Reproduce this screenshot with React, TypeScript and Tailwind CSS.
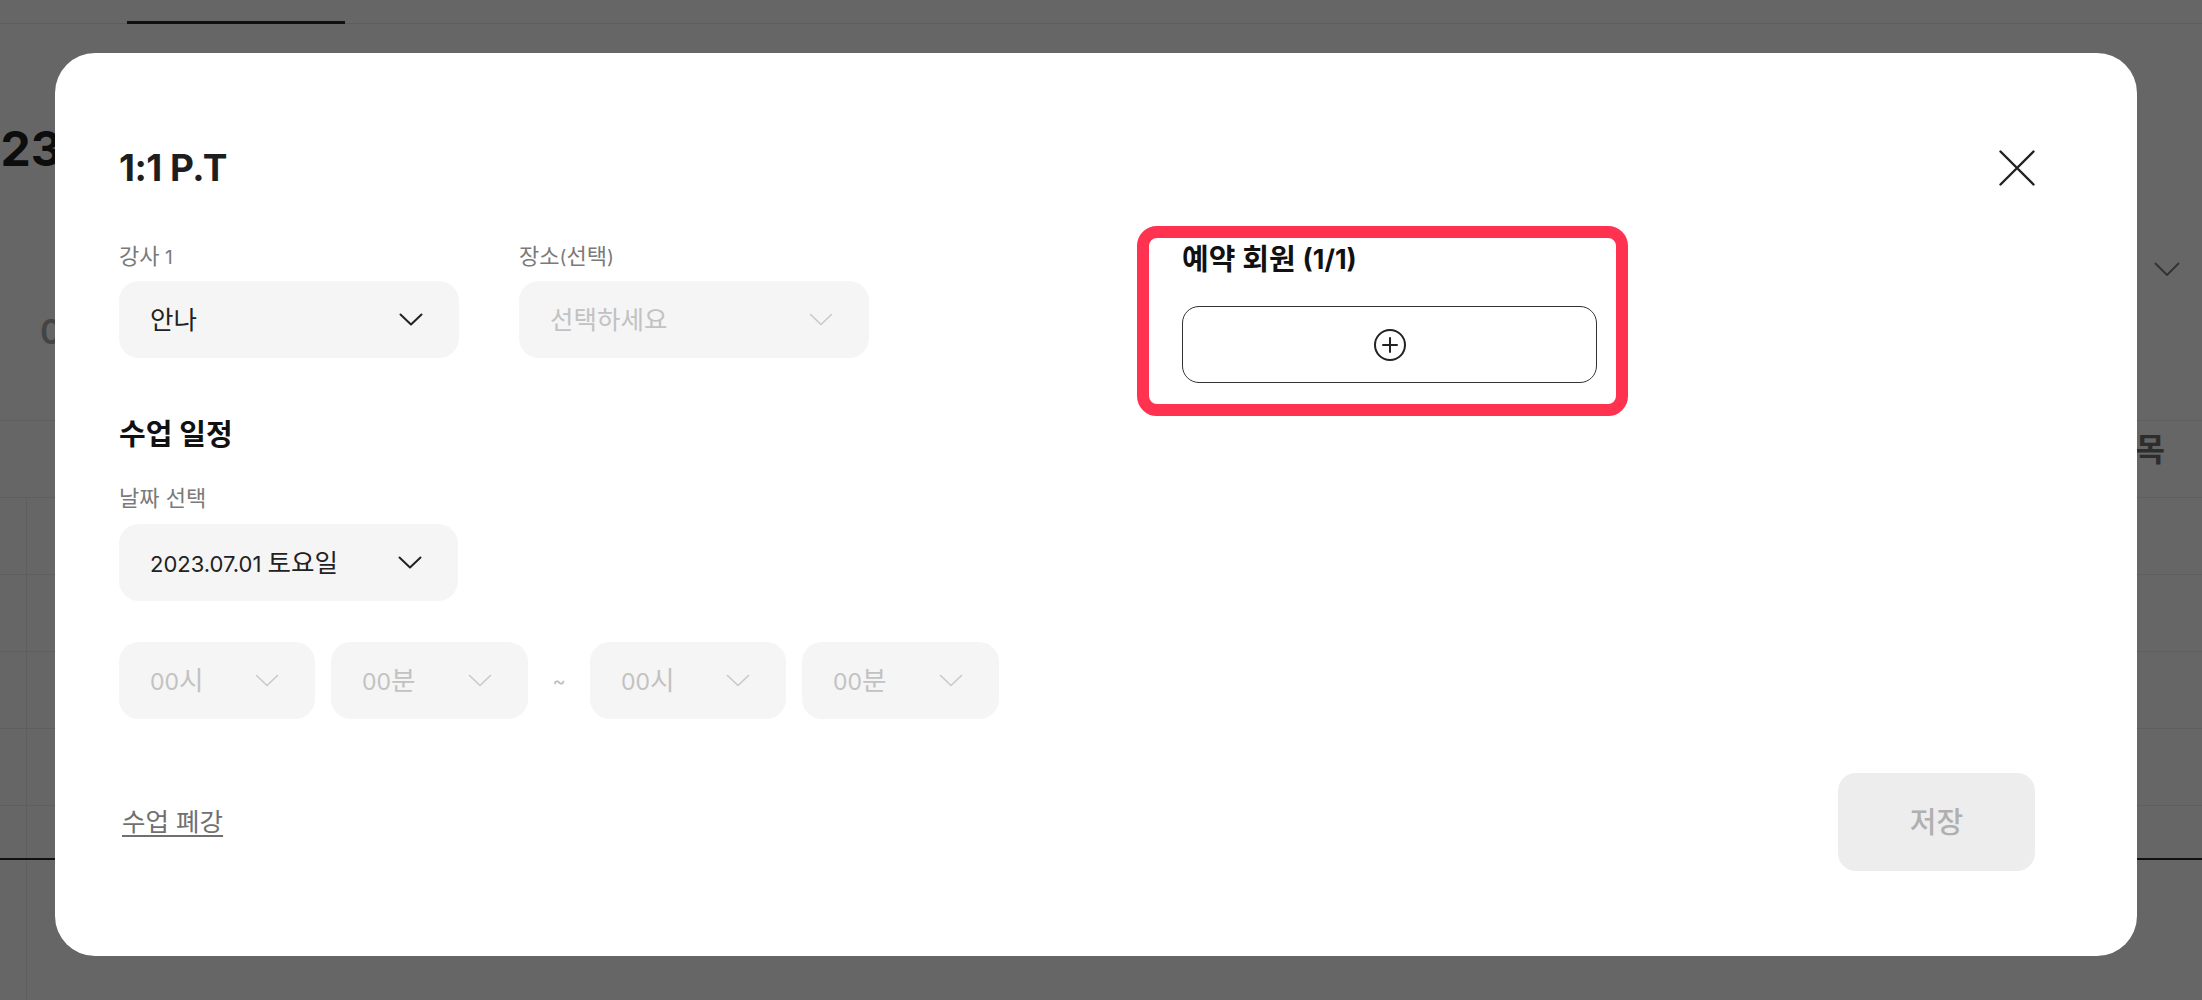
import React from "react";

const font = "font-['Inter','Noto_Sans_CJK_KR',sans-serif]";

// Hangul runs are drawn a little larger so they match the reference's Korean glyph size
function T({ s }: { s: string }) {
  const parts = s.split(/([\uAC00-\uD7A3]+(?: [\uAC00-\uD7A3]+)*)/);
  return (
    <>
      {parts.map((p, i) =>
        /[\uAC00-\uD7A3]/.test(p) ? (
          <span key={i} className="text-[1.16em]">{p}</span>
        ) : (
          <React.Fragment key={i}>{p}</React.Fragment>
        )
      )}
    </>
  );
}

function Chevron({ muted }: { muted?: boolean }) {
  return (
    <svg width="24" height="13" viewBox="0 0 24 13" fill="none" stroke={muted ? "#c9c9c9" : "#222"} strokeWidth={muted ? 1.6 : 2} strokeLinecap="round" strokeLinejoin="round">
      <path d="M1.5 1.5 12 11.5 22.5 1.5" />
    </svg>
  );
}

function SelectBox({ text, muted, width, size }: { text: string; muted?: boolean; width: string; size?: string }) {
  return (
    <div className={`flex h-[77px] items-center justify-between rounded-[20px] bg-[#f5f5f5] pl-[31px] pr-[36px] ${width}`}>
      <span className={`${size ?? "text-[22px]"} leading-none ${muted ? "text-[#c2c2c2]" : "text-[#222]"}`}>
        <T s={text} />
      </span>
      <Chevron muted={muted} />
    </div>
  );
}

function Label({ s }: { s: string }) {
  return (
    <span className="block h-[28px] whitespace-pre text-[19px] leading-[28px] text-[#7a7a7a]">
      <T s={s} />
    </span>
  );
}

function Background() {
  return (
    <div className="flex h-full flex-col">
      <div className="flex h-[24px] items-end border-b border-[#e8e8e8]">
        <div className="ml-[127px] h-[3px] w-[218px] translate-y-[1px] bg-[#2a2a2a]" />
      </div>
      <div className="flex h-[397px] justify-between border-b border-[#ececec]">
        <div className="flex flex-col">
          <div className="-ml-[62px] mt-[96px] text-[48px] font-bold leading-[58px] text-[#222]">2023.07</div>
          <div className="ml-[40px] mt-[132px] text-[34px] font-semibold leading-[44px] text-[#aaa]">0</div>
        </div>
        <div className="mr-[22px] mt-[238px]">
          <svg width="26" height="14" viewBox="0 0 26 14" fill="none" stroke="#808080" strokeWidth="2">
            <path d="M1 1 13 13 25 1" />
          </svg>
        </div>
      </div>
      <div className="flex h-[77px] items-center justify-end border-b border-[#ececec] pb-[18px] pr-[37px]">
        <span className="text-[32px] font-bold text-[#707070]">목</span>
      </div>
      {[0, 1, 2, 3].map((i) => (
        <div key={i} className="flex h-[77px] border-b border-[#ececec]">
          <div className="w-[27px] border-r border-[#ececec]" />
        </div>
      ))}
      <div className="flex h-[54px] border-b-2 border-[#2a2a2a]">
        <div className="w-[27px] border-r border-[#ececec]" />
      </div>
      <div className="flex flex-1">
        <div className="w-[27px] border-r border-[#ececec]" />
      </div>
    </div>
  );
}

export default function App() {
  return (
    <div className={`relative h-[1000px] w-full overflow-hidden bg-white ${font}`}>
      <Background />

      <div className="absolute inset-0 flex items-start bg-black/60 pl-[55px] pt-[53px]">
        <div className="flex w-[2082px] flex-col rounded-[40px] bg-white pb-[85px] pl-[64px] pr-[102px] pt-[93px]">
          <div className="flex items-center justify-between">
            <h2 className="text-[37px] font-bold leading-[43px] tracking-[-0.5px] text-[#1e1e1e]">1:1 P.T</h2>
            <button className="flex h-[36px] w-[36px] items-center justify-center">
              <svg width="36" height="36" viewBox="0 0 36 36" fill="none" stroke="#222" strokeWidth="2.4" strokeLinecap="round">
                <path d="M1.5 1.5 34.5 34.5M34.5 1.5 1.5 34.5" />
              </svg>
            </button>
          </div>

          <div className="mt-[37px] flex items-start">
            <div className="flex w-[1018px] flex-col pt-[16px]">
              <div className="flex gap-[60px]">
                <div className="flex flex-col gap-[11px]">
                  <Label s="강사 1" />
                  <SelectBox text="안나" width="w-[340px]" />
                </div>
                <div className="flex flex-col gap-[11px]">
                  <Label s="장소(선택)" />
                  <SelectBox text="선택하세요" muted width="w-[350px]" />
                </div>
              </div>

              <h3 className="mt-[59px] flex h-[35px] items-center text-[25px] font-bold leading-none text-[#111]"><T s="수업 일정" /></h3>
              <div className="mt-[32px]">
                <Label s="날짜 선택" />
              </div>
              <div className="mt-[12px]">
                <SelectBox text="2023.07.01 토요일" width="w-[339px]" />
              </div>

              <div className="mt-[41px] flex items-center">
                <div className="flex gap-[16px]">
                  <SelectBox text="00시" muted width="w-[196px]" size="text-[23px]" />
                  <SelectBox text="00분" muted width="w-[197px]" size="text-[23px]" />
                </div>
                <span className="w-[62px] text-center text-[20px] text-[#bdbdbd]">~</span>
                <div className="flex gap-[16px]">
                  <SelectBox text="00시" muted width="w-[196px]" size="text-[23px]" />
                  <SelectBox text="00분" muted width="w-[197px]" size="text-[23px]" />
                </div>
              </div>
            </div>

            <div className="w-[491px] rounded-[20px] border-[12px] border-[#ff334f] pb-[21px] pl-[33px] pr-[19px] pt-[4px]">
              <h3 className="flex h-[35px] items-center gap-[7px] text-[27px] font-bold leading-none text-[#111]">
                <span className="text-[29px]">예약 회원</span>
                <span>(1/1)</span>
              </h3>
              <button className="mt-[29px] flex h-[77px] w-full items-center justify-center rounded-[17px] border-[1.5px] border-[#333]">
                <svg width="34" height="34" viewBox="0 0 34 34" fill="none" stroke="#222" strokeWidth="2" strokeLinecap="round">
                  <circle cx="17" cy="17" r="15" />
                  <path d="M17 10v14M10 17h14" />
                </svg>
              </button>
            </div>
          </div>

          <div className="mt-[54px] flex items-center justify-between">
            <button className="pl-[3px] text-[22px] leading-[30px] text-[#707070] underline decoration-[1.5px] underline-offset-[4px]"><T s="수업 폐강" /></button>
            <button className="flex h-[98px] w-[197px] items-center justify-center rounded-[18px] bg-[#ededed] text-[25px] font-medium leading-none text-[#b0b0b0]"><T s="저장" /></button>
          </div>
        </div>
      </div>
    </div>
  );
}
